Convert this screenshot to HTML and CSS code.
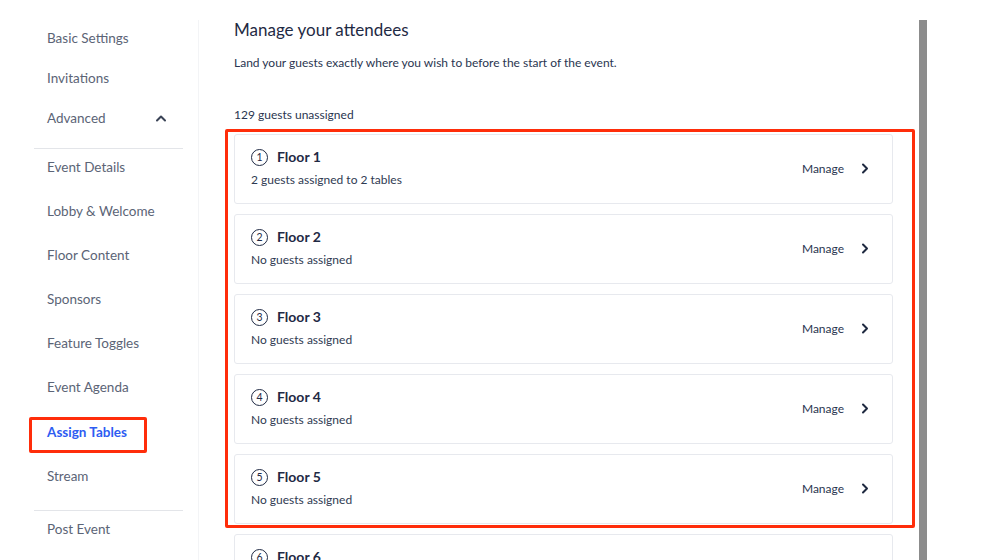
FILE: index.html
```html
<!DOCTYPE html>
<html lang="en">
<head>
<meta charset="utf-8">
<title>Assign Tables</title>
<link rel="stylesheet" href="styles.css">
</head>
<body>
<div class="layout">
  <aside class="sidebar">
    <nav class="group group-top">
      <a class="nav-item">Basic Settings</a>
      <a class="nav-item">Invitations</a>
      <a class="nav-item nav-toggle">Advanced
        <svg class="chev-up" width="12" height="8" viewBox="0 0 12 8"><path d="M2 6.5 L6 2.5 L10 6.5" fill="none" stroke="#3a4356" stroke-width="2" stroke-linecap="round" stroke-linejoin="round"/></svg>
      </a>
    </nav>
    <nav class="group group-adv">
      <a class="nav-item">Event Details</a>
      <a class="nav-item">Lobby &amp; Welcome</a>
      <a class="nav-item">Floor Content</a>
      <a class="nav-item">Sponsors</a>
      <a class="nav-item">Feature Toggles</a>
      <a class="nav-item">Event Agenda</a>
      <a class="nav-item active">Assign Tables</a>
      <a class="nav-item">Stream</a>
    </nav>
    <nav class="group group-post">
      <a class="nav-item">Post Event</a>
    </nav>
  </aside>

  <main class="main">
    <h1 class="title">Manage your attendees</h1>
    <p class="lead">Land your guests exactly where you wish to before the start of the event.</p>
    <p class="count">129 guests unassigned</p>

    <div class="floors">
      <div class="floor">
        <div class="floor-info">
          <div class="floor-name"><span class="num">1</span>Floor 1</div>
          <div class="floor-sub">2 guests assigned to 2 tables</div>
        </div>
        <div class="manage">Manage<svg class="chev" width="8" height="11" viewBox="0 0 8 11"><path d="M2 1.5 L6 5.5 L2 9.5" fill="none" stroke="#1e2940" stroke-width="2" stroke-linecap="round" stroke-linejoin="round"/></svg></div>
      </div>
      <div class="floor">
        <div class="floor-info">
          <div class="floor-name"><span class="num">2</span>Floor 2</div>
          <div class="floor-sub">No guests assigned</div>
        </div>
        <div class="manage">Manage<svg class="chev" width="8" height="11" viewBox="0 0 8 11"><path d="M2 1.5 L6 5.5 L2 9.5" fill="none" stroke="#1e2940" stroke-width="2" stroke-linecap="round" stroke-linejoin="round"/></svg></div>
      </div>
      <div class="floor">
        <div class="floor-info">
          <div class="floor-name"><span class="num">3</span>Floor 3</div>
          <div class="floor-sub">No guests assigned</div>
        </div>
        <div class="manage">Manage<svg class="chev" width="8" height="11" viewBox="0 0 8 11"><path d="M2 1.5 L6 5.5 L2 9.5" fill="none" stroke="#1e2940" stroke-width="2" stroke-linecap="round" stroke-linejoin="round"/></svg></div>
      </div>
      <div class="floor">
        <div class="floor-info">
          <div class="floor-name"><span class="num">4</span>Floor 4</div>
          <div class="floor-sub">No guests assigned</div>
        </div>
        <div class="manage">Manage<svg class="chev" width="8" height="11" viewBox="0 0 8 11"><path d="M2 1.5 L6 5.5 L2 9.5" fill="none" stroke="#1e2940" stroke-width="2" stroke-linecap="round" stroke-linejoin="round"/></svg></div>
      </div>
      <div class="floor">
        <div class="floor-info">
          <div class="floor-name"><span class="num">5</span>Floor 5</div>
          <div class="floor-sub">No guests assigned</div>
        </div>
        <div class="manage">Manage<svg class="chev" width="8" height="11" viewBox="0 0 8 11"><path d="M2 1.5 L6 5.5 L2 9.5" fill="none" stroke="#1e2940" stroke-width="2" stroke-linecap="round" stroke-linejoin="round"/></svg></div>
      </div>
      <div class="floor">
        <div class="floor-info">
          <div class="floor-name"><span class="num">6</span>Floor 6</div>
          <div class="floor-sub">No guests assigned</div>
        </div>
        <div class="manage">Manage<svg class="chev" width="8" height="11" viewBox="0 0 8 11"><path d="M2 1.5 L6 5.5 L2 9.5" fill="none" stroke="#1e2940" stroke-width="2" stroke-linecap="round" stroke-linejoin="round"/></svg></div>
      </div>
    </div>
  </main>

  <div class="scrollbar"></div>
</div>

<div class="mark mark-nav"></div>
<div class="mark mark-floors"></div>
</body>
</html>
```

FILE: styles.css
```css
* { box-sizing: border-box; }

html, body {
  margin: 0;
  padding: 0;
  height: 560px;
  overflow: hidden;
  background: #ffffff;
}

body {
  font-family: Lato, "Noto Sans", "Liberation Sans", sans-serif;
  color: #1f2a44;
  position: relative;
}

.layout {
  display: flex;
  align-items: stretch;
  padding-top: 20px;
  height: 560px;
}

/* Sidebar */
.sidebar {
  width: 199px;
  flex: 0 0 199px;
  border-right: 1px solid #f3f4f6;
  padding: 0 15px 0 34px;
}

.group {
  display: flex;
  flex-direction: column;
}

.group-top {
  padding-top: 8px;
  gap: 20px;
  padding-bottom: 20px;
  border-bottom: 1px solid #e3e5e9;
}

.group-adv {
  padding-top: 8px;
  gap: 24px;
  padding-bottom: 24px;
  border-bottom: 1px solid #e3e5e9;
}

.group-post {
  padding-top: 8px;
}

.nav-item {
  display: flex;
  align-items: center;
  justify-content: space-between;
  padding-left: 13px;
  padding-right: 16px;
  height: 20px;
  line-height: 20px;
  font-size: 13.5px;
  color: #5b6476;
  text-decoration: none;
}

.nav-item.active {
  color: #2d5cf2;
  font-weight: 700;
  height: 21px;
  padding-top: 2px;
  line-height: 19px;
}

.chev-up { display: block; }

/* Main */
.main {
  width: 694px;
  flex: 0 0 694px;
  padding-left: 35px;
}

.title {
  margin: 0;
  font-size: 17px;
  line-height: 20px;
  font-weight: 400;
  color: #1f2a44;
}

.lead {
  margin: 14px 0 0;
  font-size: 12px;
  line-height: 18px;
  color: #2a3550;
}

.count {
  margin: 34px 0 0;
  font-size: 12px;
  line-height: 18px;
  color: #2a3550;
}

.floors {
  margin-top: 10px;
  display: flex;
  flex-direction: column;
  gap: 10px;
}

.floor {
  height: 70px;
  border: 1px solid #e7e9ee;
  border-radius: 3px;
  display: flex;
  align-items: center;
  justify-content: space-between;
  padding: 0 23px 2px 16px;
}

.floor-info {
  display: flex;
  flex-direction: column;
  gap: 4px;
}

.floor-name {
  display: flex;
  align-items: center;
  gap: 9px;
  font-size: 14px;
  line-height: 20px;
  font-weight: 700;
  color: #1f2a44;
}

.num {
  width: 17px;
  height: 17px;
  border: 1.3px solid #1f2a44;
  border-radius: 50%;
  display: inline-flex;
  align-items: center;
  justify-content: center;
  font-size: 10.5px;
  font-weight: 400;
  line-height: 1;
}

.floor-sub {
  font-size: 12px;
  line-height: 18px;
  color: #2f3a52;
}

.manage {
  display: flex;
  align-items: center;
  gap: 17px;
  font-size: 12px;
  color: #2a3550;
}

.chev { display: block; }

/* Fake scrollbar */
.scrollbar {
  width: 8px;
  flex: 0 0 8px;
  margin-left: 26px;
  background: #8c8c8c;
}

/* Annotation highlight boxes */
.mark {
  position: absolute;
  border: 3px solid #ff2d0a;
  border-radius: 2px;
  pointer-events: none;
}

.mark-nav {
  left: 29px;
  top: 417px;
  width: 118px;
  height: 36px;
}

.mark-floors {
  left: 225px;
  top: 129px;
  width: 690px;
  height: 399px;
}
```
